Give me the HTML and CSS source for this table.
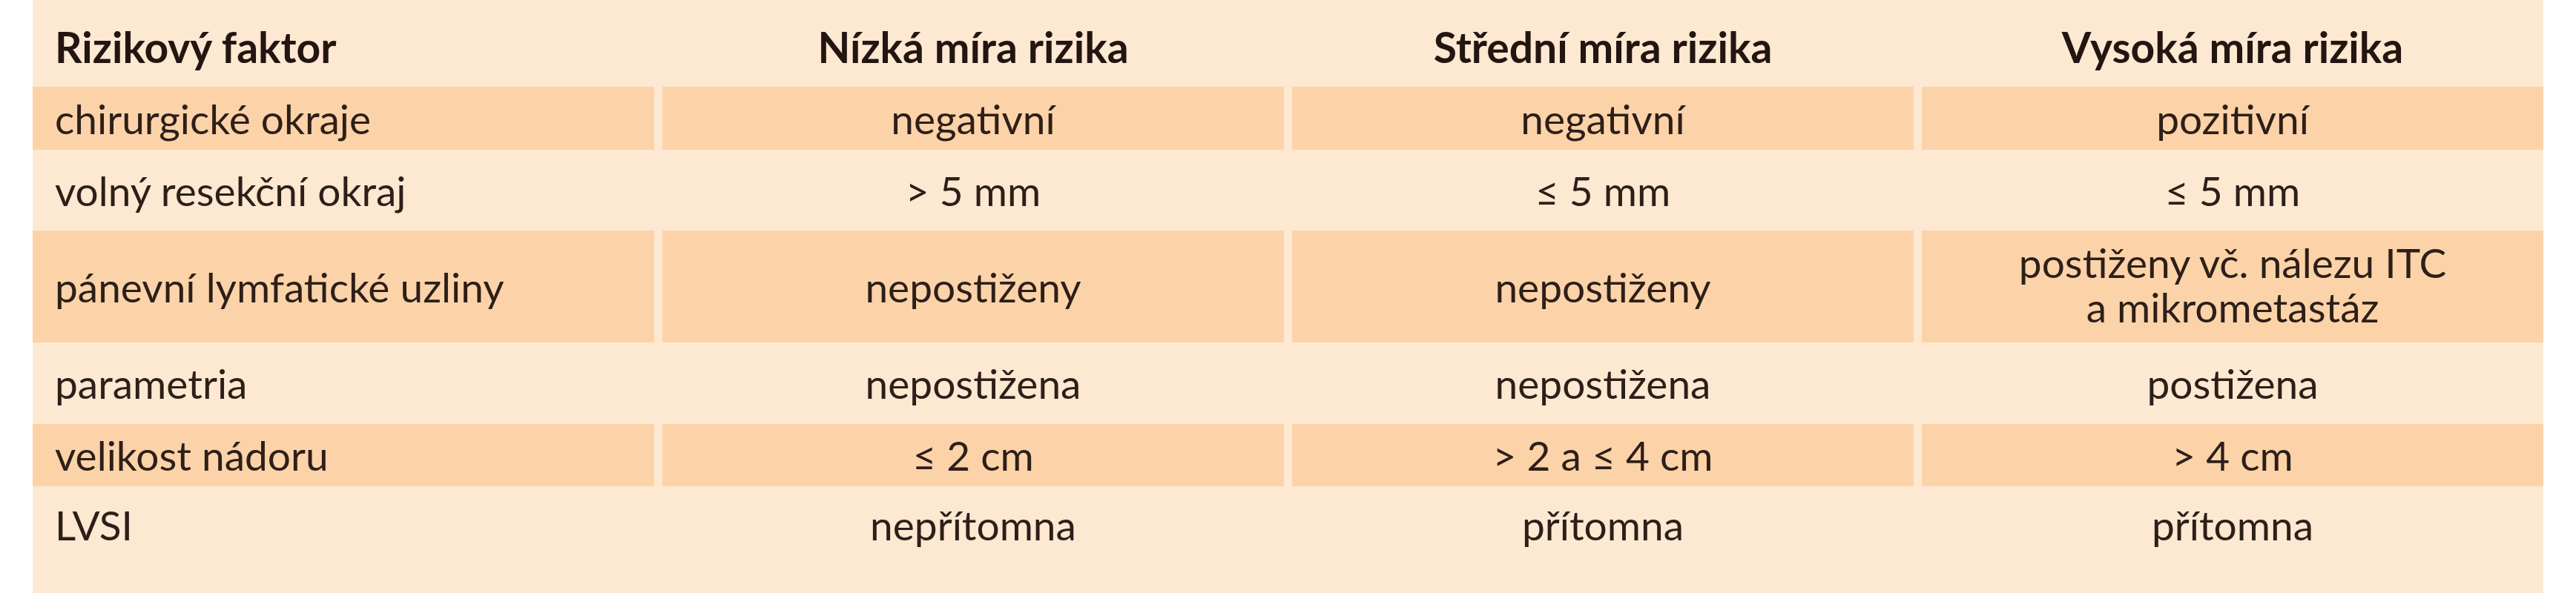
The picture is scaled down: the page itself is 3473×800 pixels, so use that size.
FILE: index.html
```html
<!DOCTYPE html>
<html lang="cs">
<head>
<meta charset="utf-8">
<title>Rizikové faktory</title>
<link rel="stylesheet" href="styles.css">
</head>
<body>
<div class="page">
  <div class="table">
    <div class="row head">
      <div class="cell first">Rizikový faktor</div>
      <div class="cell">Nízká míra rizika</div>
      <div class="cell">Střední míra rizika</div>
      <div class="cell">Vysoká míra rizika</div>
    </div>
    <div class="row dark r1">
      <div class="cell first">chirurgické okraje</div>
      <div class="cell">negativní</div>
      <div class="cell">negativní</div>
      <div class="cell">pozitivní</div>
    </div>
    <div class="row light r2">
      <div class="cell first">volný resekční okraj</div>
      <div class="cell">&gt; 5 mm</div>
      <div class="cell">≤ 5 mm</div>
      <div class="cell">≤ 5 mm</div>
    </div>
    <div class="row dark r3">
      <div class="cell first">pánevní lymfatické uzliny</div>
      <div class="cell">nepostiženy</div>
      <div class="cell">nepostiženy</div>
      <div class="cell multi">postiženy vč. nálezu ITC<br>a mikrometastáz</div>
    </div>
    <div class="row light r4">
      <div class="cell first">parametria</div>
      <div class="cell">nepostižena</div>
      <div class="cell">nepostižena</div>
      <div class="cell">postižena</div>
    </div>
    <div class="row dark r5">
      <div class="cell first">velikost nádoru</div>
      <div class="cell">≤ 2 cm</div>
      <div class="cell">&gt; 2 a ≤ 4 cm</div>
      <div class="cell">&gt; 4 cm</div>
    </div>
    <div class="row light r6">
      <div class="cell first">LVSI</div>
      <div class="cell">nepřítomna</div>
      <div class="cell">přítomna</div>
      <div class="cell">přítomna</div>
    </div>
  </div>
</div>
</body>
</html>
```
FILE: styles.css
```css
html, body {
  margin: 0;
  padding: 0;
  background: #ffffff;
}

.page {
  padding-left: 44px;
  height: 800px;
  overflow: hidden;
}

.table {
  width: 3385px;
  height: 800px;
  background: #fde8d2;
  font-family: Lato, "Open Sans", sans-serif;
  font-size: 55px;
  color: #2d1f18;
}

.row {
  display: grid;
  grid-template-columns: repeat(4, 1fr);
  column-gap: 11px;
}

.cell {
  display: flex;
  align-items: center;
  justify-content: center;
  text-align: center;
  line-height: 60px;
  white-space: nowrap;
}

.cell.first {
  justify-content: flex-start;
  text-align: left;
  padding-left: 30px;
}

.head {
  height: 117px;
}

.head .cell {
  font-size: 57px;
  font-weight: 700;
  color: #231611;
  padding-top: 9px;
  box-sizing: border-box;
}

.dark .cell {
  background: #fcd3a9;
}

.r1 { height: 85px; }
.r2 { height: 109px; }
.r3 { height: 151px; }
.r4 { height: 110px; }
.r5 { height: 84px; }
.r6 { height: 104px; }

.multi {
  padding-bottom: 6px;
  box-sizing: border-box;
}
```
